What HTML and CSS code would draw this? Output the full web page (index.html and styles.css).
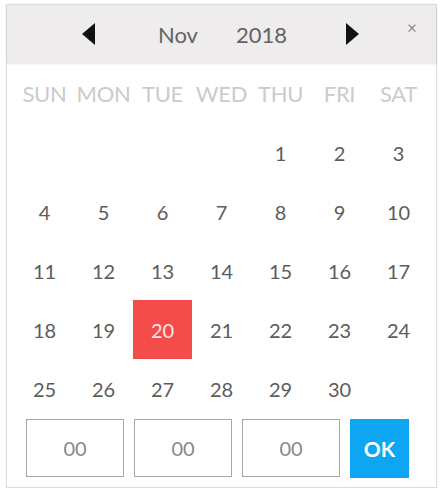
FILE: index.html
```html
<!DOCTYPE html>
<html lang="en">

<head>
    <meta charset="UTF-8">
    <meta name="viewport" content="width=device-width, initial-scale=1.0">
    <title>Date Picker</title>
    <link rel="stylesheet" href="styles.css">
</head>

<body>
    <div class="picker">
        <!--ay ve yil secimi-->
        <div class="head">
            <span class="arrow prev"></span>
            <span class="month">Nov</span>
            <span class="year">2018</span>
            <span class="arrow next"></span>
            <span class="close">&times;</span>
        </div>

        <!--takvim-->
        <div class="days">
            <div class="dow">SUN</div>
            <div class="dow">MON</div>
            <div class="dow">TUE</div>
            <div class="dow">WED</div>
            <div class="dow">THU</div>
            <div class="dow">FRI</div>
            <div class="dow">SAT</div>

            <div class="day"></div>
            <div class="day"></div>
            <div class="day"></div>
            <div class="day"></div>
            <div class="day">1</div>
            <div class="day">2</div>
            <div class="day">3</div>

            <div class="day">4</div>
            <div class="day">5</div>
            <div class="day">6</div>
            <div class="day">7</div>
            <div class="day">8</div>
            <div class="day">9</div>
            <div class="day">10</div>

            <div class="day">11</div>
            <div class="day">12</div>
            <div class="day">13</div>
            <div class="day">14</div>
            <div class="day">15</div>
            <div class="day">16</div>
            <div class="day">17</div>

            <div class="day">18</div>
            <div class="day">19</div>
            <div class="day selected">20</div>
            <div class="day">21</div>
            <div class="day">22</div>
            <div class="day">23</div>
            <div class="day">24</div>

            <div class="day">25</div>
            <div class="day">26</div>
            <div class="day">27</div>
            <div class="day">28</div>
            <div class="day">29</div>
            <div class="day">30</div>
            <div class="day"></div>
        </div>

        <!--saat secimi-->
        <div class="time">
            <input class="field" type="text" value="00">
            <input class="field" type="text" value="00">
            <input class="field" type="text" value="00">
            <button class="ok">OK</button>
        </div>
    </div>
</body>

</html>
```

FILE: styles.css
```css
body {
    margin: 0;
    background-color: #fff;
    font-family: Lato, "Open Sans", sans-serif;
}

.picker {
    width: 429px;
    height: 482px;
    margin: 4px 0 0 6px;
    border: 1px solid #dcdcdc;
    box-shadow: 0 0 2px rgba(0, 0, 0, 0.08);
}

.head {
    display: flex;
    align-items: center;
    height: 58px;
    padding-left: 75px;
    background-color: #eeecec;
    box-shadow: 0 1px 2px rgba(0, 0, 0, 0.12);
    color: #636363;
    font-size: 22px;
}

/*ok isaretleri*/
.arrow {
    width: 0;
    height: 0;
    border-top: 11px solid transparent;
    border-bottom: 11px solid transparent;
}

.arrow.prev {
    border-right: 13px solid #111;
}

.arrow.next {
    border-left: 13px solid #111;
    margin-left: 59px;
}

.month {
    margin-left: 63px;
}

.year {
    margin-left: 38px;
}

.close {
    margin-left: 48px;
    margin-top: -14px;
    font-size: 17px;
    color: #888;
}

.days {
    display: grid;
    grid-template-columns: repeat(7, 59px);
    grid-template-rows: 60px repeat(5, 59px);
    padding-left: 8px;
}

.dow,
.day {
    display: flex;
    align-items: center;
    justify-content: center;
}

.dow {
    color: #cbcbcb;
    font-size: 22px;
    letter-spacing: -0.3px;
    white-space: nowrap;
}

.day {
    color: #5c5c5c;
    font-size: 20px;
}

.day.selected {
    background-color: #f44b4b;
    color: #fde6e6;
}

.time {
    display: flex;
    gap: 10px;
    padding: 1px 0 0 19px;
}

.field {
    box-sizing: border-box;
    width: 98px;
    height: 58px;
    margin: 0;
    border: 1px solid #a8a8a8;
    text-align: center;
    font-family: Lato, "Open Sans", sans-serif;
    font-size: 20px;
    color: #888;
}

.ok {
    width: 59px;
    height: 59px;
    margin: 0;
    border: none;
    background-color: #0ea5f2;
    color: #fff;
    font-family: Lato, "Open Sans", sans-serif;
    font-weight: bold;
    font-size: 21px;
}
```
